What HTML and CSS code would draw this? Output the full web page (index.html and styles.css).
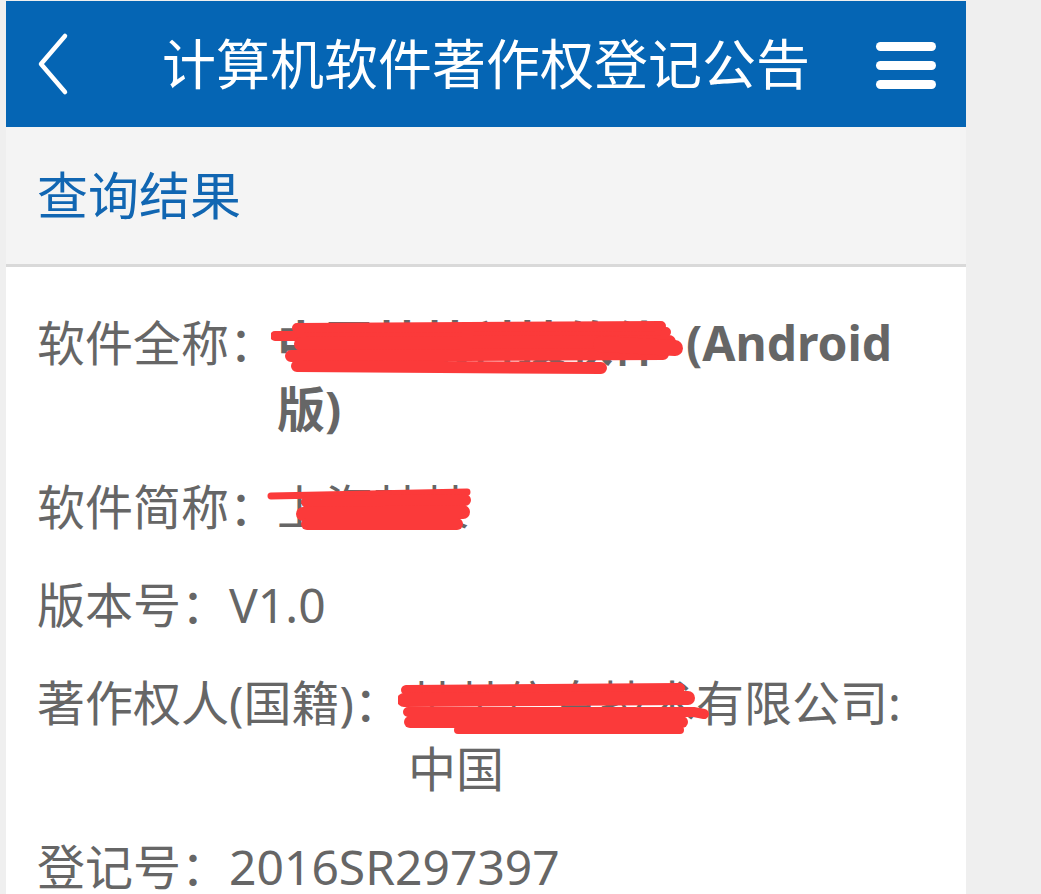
FILE: index.html
```html
<!DOCTYPE html>
<html lang="zh-CN">
<head>
  <meta charset="UTF-8">
  <meta name="viewport" content="width=device-width, initial-scale=1.0">
  <title>计算机软件著作权登记公告</title>
  <link rel="stylesheet" href="styles.css">
</head>
<body>

  <div class="page">
    <!-- Top bar: back - title - menu -->
    <div class="topbar">
      <a class="back" href="#">
        <svg width="40" height="64" viewBox="0 0 40 64">
          <path d="M29 4 L5 32 L29 60" fill="none" stroke="#fff" stroke-width="4.5" stroke-linecap="round" stroke-linejoin="round"/>
        </svg>
      </a>
      <h1 class="title">计算机软件著作权登记公告</h1>
      <a class="menu" href="#">
        <span></span>
        <span></span>
        <span></span>
      </a>
    </div>

    <div class="section-head">查询结果</div>

    <!-- Result rows -->
    <div class="result">
      <div class="row">
        <span class="label">软件全称：</span>
        <span class="value bold">
          中国某某科技软件&nbsp; (Android版)
          <svg class="redact" width="420" height="70" viewBox="0 0 420 70" style="left:-6px;top:4px">
            <g fill="none" stroke="#fb3a3a" stroke-linecap="round">
              <path d="M4 22 L60 22 L395 18" stroke-width="10"/>
              <path d="M26 14 L390 12" stroke-width="10"/>
              <path d="M30 30 L398 28" stroke-width="14"/>
              <path d="M20 42 L392 40" stroke-width="12"/>
              <path d="M26 52 L330 54" stroke-width="12"/>
              <path d="M330 30 L404 34" stroke-width="16"/>
            </g>
          </svg>
        </span>
      </div>

      <div class="row">
        <span class="label">软件简称：</span>
        <span class="value">
          上海某某
          <svg class="redact" width="220" height="60" viewBox="0 0 220 60" style="left:-10px;top:8px">
            <g fill="none" stroke="#fb3a3a" stroke-linecap="round">
              <path d="M4 14 L200 10" stroke-width="7"/>
              <path d="M40 20 L198 18" stroke-width="12"/>
              <path d="M36 32 L196 30" stroke-width="14"/>
              <path d="M40 42 L190 42" stroke-width="12"/>
            </g>
          </svg>
        </span>
      </div>

      <div class="row">
        <span class="label">版本号：</span>
        <span class="value">V1.0</span>
      </div>

      <div class="row">
        <span class="label label-wide">著作权人(国籍)：</span>
        <span class="value">
          某某信息技术有限公司:中国
          <svg class="redact" width="320" height="70" viewBox="0 0 320 70" style="left:-10px;top:6px">
            <g fill="none" stroke="#fb3a3a" stroke-linecap="round">
              <path d="M8 14 L282 12" stroke-width="10"/>
              <path d="M6 24 L290 22" stroke-width="14"/>
              <path d="M10 36 L296 36 L306 38" stroke-width="10"/>
              <path d="M12 46 L284 46" stroke-width="12"/>
              <path d="M60 54 L282 54" stroke-width="8"/>
            </g>
          </svg>
        </span>
      </div>

      <div class="row">
        <span class="label">登记号：</span>
        <span class="value">2016SR297397</span>
      </div>
    </div>
  </div>

</body>
</html>
```

FILE: styles.css
```css
body {
  margin: 0;
  padding: 1px 75px 0 6px;
  background-color: #efefef;
  font-family: "Noto Sans", "Noto Sans CJK SC", sans-serif;
}
.page {
  width: 960px;
  min-height: 893px;
  background-color: #fff;
}
.topbar {
  height: 126px;
  background-color: #0565b4;
  display: flex;
  align-items: center;
  padding: 0 30px;
  box-sizing: border-box;
}
.back {
  display: flex;
  width: 60px;
}
.title {
  flex: 1;
  margin: 0;
  text-align: center;
  color: #fff;
  font-size: 54px;
  font-weight: normal;
  line-height: 1;
}
.menu {
  display: flex;
  flex-direction: column;
  gap: 10px;
  width: 60px;
  margin-top: 2px;
}
.menu span {
  display: block;
  height: 9px;
  background-color: #fff;
  border-radius: 5px;
}
.section-head {
  height: 137px;
  background-color: #f4f4f4;
  border-bottom: 3px solid #d9d9d9;
  box-sizing: content-box;
  display: flex;
  align-items: center;
  padding-left: 31px;
  color: #1166b2;
  font-size: 51px;
  line-height: 1;
}
.result {
  padding: 43px 31px 0 31px;
  color: #666;
  font-size: 48px;
  line-height: 66px;
}
.row {
  display: flex;
  margin-bottom: 32px;
}
.label {
  flex: none;
}
.label-wide {
  width: 371px;
}
.value {
  flex: 1;
  position: relative;
}
.bold {
  font-weight: bold;
}
.redact {
  position: absolute;
}
```
